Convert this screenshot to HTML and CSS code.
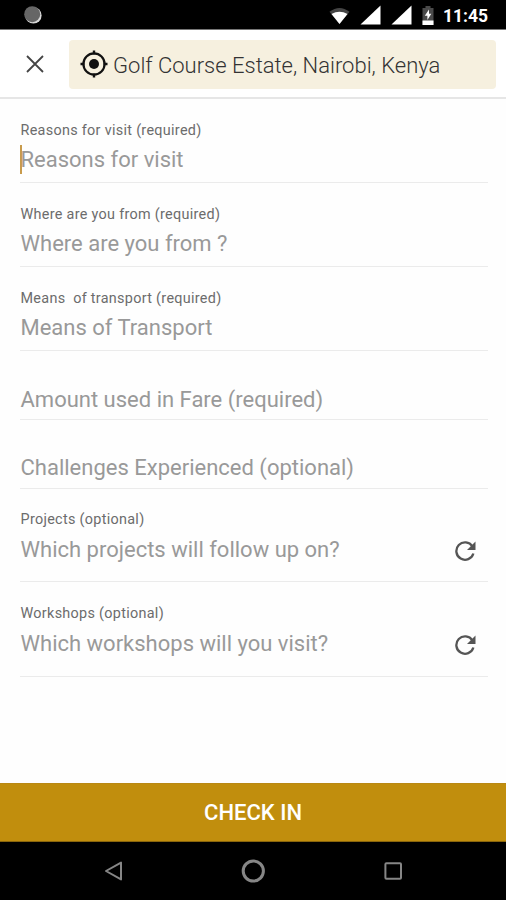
FILE: index.html
```html
<!DOCTYPE html>
<html lang="en">
<head>
    <meta charset="UTF-8">
    <meta name="viewport" content="width=device-width, initial-scale=1.0">
    <title>Check In</title>
    <link rel="stylesheet" href="styles.css">
</head>
<body>
    <div class="statusbar">
        <svg class="sync" width="18" height="18" viewBox="0 0 18 18">
            <circle cx="9.4" cy="9.4" r="8.2" fill="#d8d8d8"/>
            <circle cx="8.2" cy="8.2" r="8" fill="#666"/>
        </svg>
        <div class="status-icons">
            <svg class="wifi" width="21" height="18" viewBox="0 0 22 18">
                <path d="M0.5 4.5Q11 -3.5 21.5 4.5L11 17.5Z" fill="#444"/>
                <path d="M2.6 7Q11 2 19.4 7L11 17.5Z" fill="#fff"/>
            </svg>
            <svg class="signal" width="21" height="20" viewBox="0 0 21 20">
                <path d="M0.5 19.5L20.5 0.5V19.5Z" fill="#fff"/>
            </svg>
            <svg class="signal" width="21" height="20" viewBox="0 0 21 20">
                <path d="M0.5 19.5L20.5 0.5V19.5Z" fill="#fff"/>
            </svg>
            <svg class="battery" width="12" height="19" viewBox="0 0 12 19">
                <path d="M3.5 0H8.5V2H11.5V19H0.5V2H3.5Z" fill="#4a4a4a"/>
                <path d="M0.5 14.5H11.5V19H0.5Z" fill="#fff"/>
                <path d="M7 3.5L2.8 9.8H5.4V14L9.3 7.8H7Z" fill="#fff"/>
            </svg>
            <span class="clock">11:45</span>
        </div>
    </div>

    <header class="header">
        <svg class="close" width="18" height="18" viewBox="0 0 18 18">
            <path d="M1 1L17 17M17 1L1 17" stroke="#444" stroke-width="1.8" fill="none"/>
        </svg>
        <div class="location">
            <svg class="target" width="28" height="28" viewBox="0 0 28 28">
                <circle cx="14" cy="14" r="10.6" stroke="#111" stroke-width="2.2" fill="none"/>
                <circle cx="14" cy="14" r="5" fill="#111"/>
                <path d="M14 0.5V4.5M14 23.5V27.5M0.5 14H4.5M23.5 14H27.5" stroke="#111" stroke-width="2.4"/>
            </svg>
            <span class="place">Golf Course Estate, Nairobi, Kenya</span>
        </div>
    </header>

    <main class="form">
        <div class="field">
            <span class="label">Reasons for visit (required)</span>
            <span class="value focused">Reasons for visit</span>
        </div>
        <div class="field">
            <span class="label">Where are you from (required)</span>
            <span class="value">Where are you from ?</span>
        </div>
        <div class="field">
            <span class="label">Means  of transport (required)</span>
            <span class="value">Means of Transport</span>
        </div>
        <div class="field plain">
            <span class="value">Amount used in Fare (required)</span>
        </div>
        <div class="field plain">
            <span class="value">Challenges Experienced (optional)</span>
        </div>
        <div class="field picker first-picker">
            <span class="label">Projects (optional)</span>
            <div class="row">
                <span class="value">Which projects will follow up on?</span>
                <svg class="refresh" width="21" height="20" viewBox="0 0 21 20">
                    <path d="M17.4 5.4A8.7 8.7 0 1 0 18.4 12.5" stroke="#555" stroke-width="2.3" fill="none"/>
                    <path d="M20.5 0.5V9H12Z" fill="#555"/>
                </svg>
            </div>
        </div>
        <div class="field picker">
            <span class="label">Workshops (optional)</span>
            <div class="row">
                <span class="value">Which workshops will you visit?</span>
                <svg class="refresh" width="21" height="20" viewBox="0 0 21 20">
                    <path d="M17.4 5.4A8.7 8.7 0 1 0 18.4 12.5" stroke="#555" stroke-width="2.3" fill="none"/>
                    <path d="M20.5 0.5V9H12Z" fill="#555"/>
                </svg>
            </div>
        </div>
    </main>

    <button class="checkin">CHECK IN</button>

    <nav class="navbar">
        <svg width="24" height="24" viewBox="0 0 24 24">
            <path d="M5 12L20 3.6V20.4Z" stroke="#868686" stroke-width="2" stroke-linejoin="round" fill="none"/>
        </svg>
        <svg width="24" height="24" viewBox="0 0 24 24">
            <circle cx="12.3" cy="12" r="10.1" stroke="#868686" stroke-width="3" fill="none"/>
        </svg>
        <svg width="24" height="24" viewBox="0 0 24 24">
            <rect x="4.4" y="4.2" width="15.6" height="15.6" rx="1" stroke="#868686" stroke-width="2" fill="none"/>
        </svg>
    </nav>
</body>
</html>
```
FILE: styles.css
```css
* {
    box-sizing: border-box;
}
body {
    margin: 0;
    height: 900px;
    display: flex;
    flex-direction: column;
    font-family: Roboto, "Liberation Sans", sans-serif;
    background-color: #fefefe;
}
svg {
    display: block;
    flex: none;
}
.statusbar {
    height: 30px;
    display: flex;
    justify-content: space-between;
    padding: 0 18px 0 24px;
    background-color: #000;
    border-bottom: 1px solid #777;
}
.sync {
    margin-top: 6px;
}
.status-icons {
    display: flex;
    align-items: flex-start;
}
.wifi {
    margin: 7px 10px 0 0;
}
.signal {
    margin: 5px 10px 0 0;
}
.battery {
    margin: 6px 9px 0 0;
}
.clock {
    color: #fff;
    font-size: 17.5px;
    font-weight: bold;
    line-height: 32px;
}
.header {
    height: 69px;
    display: flex;
    align-items: center;
    padding: 1px 10px 0 26px;
    background-color: #fff;
    border-bottom: 2px solid #e6e6e6;
}
.location {
    flex: 1;
    height: 49px;
    margin-left: 25px;
    padding-left: 11px;
    display: flex;
    align-items: center;
    background-color: #f6f0df;
    border-radius: 4px;
}
.place {
    margin: 2px 0 0 5px;
    font-size: 22px;
    font-weight: 300;
    color: #333;
    white-space: nowrap;
}
.form {
    flex: 1;
    padding: 0 18px 0 20px;
}
.field {
    height: 84px;
    padding-top: 23px;
    border-bottom: 1px solid #ebebeb;
}
.label {
    display: block;
    font-size: 14.4px;
    line-height: 18px;
    letter-spacing: 0.3px;
    text-indent: 0.5px;
    color: #6c6c6c;
    white-space: pre;
}
.value {
    display: block;
    height: 30px;
    margin-top: 5px;
    font-size: 22px;
    line-height: 30px;
    text-indent: 0.5px;
    color: #999;
    white-space: nowrap;
}
.focused {
    height: 29px;
    box-shadow: inset 2px 0 #c89b4c;
}
.plain {
    height: 69px;
    padding-top: 29px;
}
.plain + .plain .value {
    margin-top: 4px;
}
.picker {
    height: 95px;
}
.picker .value {
    margin-top: 6px;
}
.first-picker {
    height: 93px;
    padding-top: 22px;
}
.row {
    display: flex;
    justify-content: space-between;
    align-items: center;
}
.refresh {
    margin: 8px 12px 0 0;
}
.checkin {
    height: 59px;
    border: none;
    border-top: 1px solid #b98814;
    border-bottom: 1px solid #8a660c;
    padding: 0;
    background-color: #c18e0d;
    color: #fff;
    font-family: inherit;
    font-size: 22px;
    font-weight: 500;
}
.navbar {
    height: 58px;
    display: flex;
    justify-content: center;
    align-items: center;
    gap: 116px;
    background-color: #000;
}
```
